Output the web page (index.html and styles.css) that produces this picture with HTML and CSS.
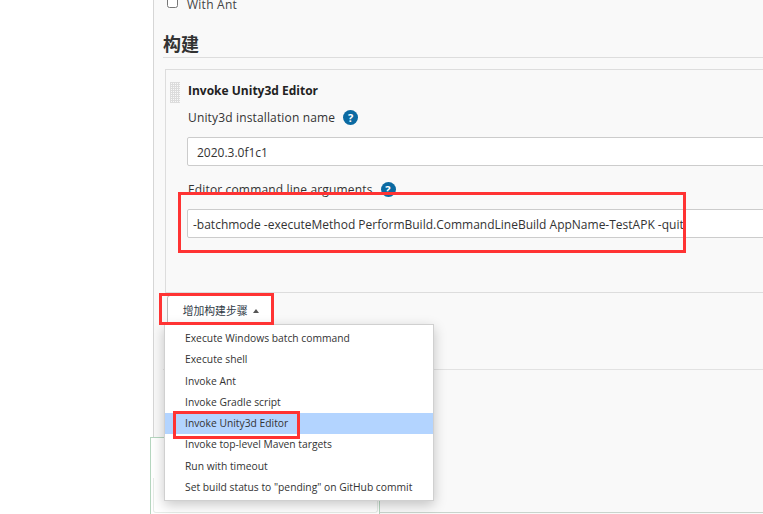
FILE: index.html
```html
<!DOCTYPE html>
<html lang="zh-CN">
<head>
  <meta charset="UTF-8">
  <title>构建</title>
  <link rel="stylesheet" href="styles.css">
</head>
<body>
  <div class="page">
    <div class="sidebar"></div>
    <div class="content">
      <label class="check-row"><input type="checkbox"> With Ant</label>
      <h2 class="section-title">构建</h2>
      <div class="build-step">
        <div class="drag-handle"></div>
        <div class="step-body">
          <div class="step-title">Invoke Unity3d Editor</div>
          <div class="field-label">Unity3d installation name <span class="help">?</span></div>
          <div class="text-input">2020.3.0f1c1</div>
          <div class="field-label second">Editor command line arguments <span class="help">?</span></div>
          <div class="text-input args">-batchmode -executeMethod PerformBuild.CommandLineBuild AppName-TestAPK -quit</div>
        </div>
      </div>
      <button class="add-step">增加构建步骤 <span class="caret"></span></button>
      <div class="lower-rule"></div>
    </div>
  </div>

  <div class="green-box"><div class="green-inner"></div></div>
  <div class="bottom-rule"></div>

  <ul class="menu">
    <li>Execute Windows batch command</li>
    <li>Execute shell</li>
    <li>Invoke Ant</li>
    <li>Invoke Gradle script</li>
    <li class="active">Invoke Unity3d Editor</li>
    <li>Invoke top-level Maven targets</li>
    <li>Run with timeout</li>
    <li>Set build status to "pending" on GitHub commit</li>
  </ul>

  <div class="mark mark-args"></div>
  <div class="mark mark-button"></div>
  <div class="mark mark-item"></div>
</body>
</html>
```

FILE: styles.css
```css
* {
  margin: 0;
  padding: 0;
  box-sizing: border-box;
}
html, body {
  height: 100%;
  overflow: hidden;
}
body {
  font-family: 'Open Sans', 'Noto Sans CJK SC', sans-serif;
  background: #fff;
  color: #333;
  font-size: 12px;
}
.page {
  display: flex;
  height: 514px;
}
.sidebar {
  width: 154px;
  flex: none;
  background: #fff;
  border-right: 1px solid #d6d6d6;
}
.content {
  flex: 1;
  min-width: 0;
  background: #f9f9f9;
  padding-left: 9px;
  overflow: hidden;
}
.check-row {
  display: flex;
  align-items: center;
  gap: 8px;
  height: 8px;
  padding-left: 4px;
  color: #444;
  font-size: 12px;
  letter-spacing: 0.25px;
}
.check-row input {
  width: 11px;
  height: 11px;
  margin: -3px 1px 0 0;
}
.section-title {
  margin-top: 24px;
  height: 26px;
  border-bottom: 1px solid #ddd;
  font-size: 18px;
  line-height: 24px;
  font-weight: 700;
  color: #333;
}
.build-step {
  display: flex;
  margin: 11px 0 0 2px;
  height: 224px;
  border-top: 1px solid #ddd;
  border-left: 1px solid #ddd;
  border-bottom: 1px solid #ddd;
}
.drag-handle {
  width: 10px;
  height: 21px;
  margin: 12px 0 0 4px;
  flex: none;
  background-image: linear-gradient(#d0d0d0 1px, transparent 1px), linear-gradient(90deg, #d0d0d0 1px, transparent 1px);
  background-size: 2px 2px;
  opacity: 0.7;
}
.step-body {
  flex: 1;
  min-width: 0;
  padding: 13px 0 0 8px;
}
.step-title {
  font-weight: 700;
  line-height: 16px;
  color: #222;
}
.field-label {
  display: flex;
  align-items: center;
  gap: 8px;
  margin-top: 10px;
  height: 16px;
  color: #333;
  letter-spacing: 0.15px;
}
.field-label.second {
  margin-top: 15px;
}
.help {
  width: 15px;
  height: 15px;
  border-radius: 50%;
  background: #0b6aa2;
  color: #fff;
  font-size: 11px;
  font-weight: 700;
  line-height: 15px;
  text-align: center;
}
.text-input {
  margin: 12px 0 0 -1px;
  height: 29px;
  width: 620px;
  padding-left: 9px;
  background: #fff;
  border: 1px solid #ccc;
  border-radius: 2px;
  line-height: 30px;
  color: #333;
  white-space: nowrap;
}
.text-input.args {
  margin-top: 12px;
  padding-left: 5px;
  line-height: 29px;
}
.add-step {
  display: block;
  margin: 2px 0 0 4px;
  width: 107px;
  height: 30px;
  padding-left: 1px;
  background: #fff;
  border: 1px solid #bbb;
  border-radius: 3px;
  font-family: inherit;
  font-size: 10.8px;
  font-weight: 400;
  color: #2f3a46;
}
.caret {
  display: inline-block;
  margin-left: 3px;
  vertical-align: 2px;
  border-left: 3.5px solid transparent;
  border-right: 3.5px solid transparent;
  border-bottom: 4px solid #555;
}
.lower-rule {
  height: 1px;
  background: #e2e2e2;
  margin-top: 44px;
}
.green-box {
  position: absolute;
  left: 150px;
  top: 437px;
  width: 230px;
  height: 77px;
  display: flex;
  padding: 40px 1px 1px 2px;
  background: #fff;
  border: 1px solid #b5d6bf;
  border-bottom: 0;
}
.green-inner {
  flex: 1;
  border: 1px solid #e6ece7;
  border-top: 0;
  border-radius: 0 0 3px 3px;
}
.bottom-rule {
  position: absolute;
  left: 380px;
  right: 0;
  top: 512px;
  height: 1px;
  background: #c9d4cc;
}
.menu {
  position: absolute;
  left: 164px;
  top: 324px;
  width: 270px;
  height: 177px;
  padding-top: 3px;
  list-style: none;
  background: #fff;
  border: 1px solid #d0d0d0;
  box-shadow: 0 4px 12px rgba(0, 0, 0, 0.22);
}
.menu li {
  height: 21.25px;
  padding-left: 20px;
  font-size: 10.3px;
  line-height: 21px;
  color: #333;
  white-space: nowrap;
}
.menu li.active {
  background: #b3d4ff;
}
.mark {
  position: absolute;
  border: 3px solid #ff3333;
}
.mark-args {
  left: 178px;
  top: 192px;
  width: 508px;
  height: 61px;
}
.mark-button {
  left: 159px;
  top: 293px;
  width: 115px;
  height: 32px;
}
.mark-item {
  left: 173px;
  top: 411px;
  width: 127px;
  height: 28px;
}
```
